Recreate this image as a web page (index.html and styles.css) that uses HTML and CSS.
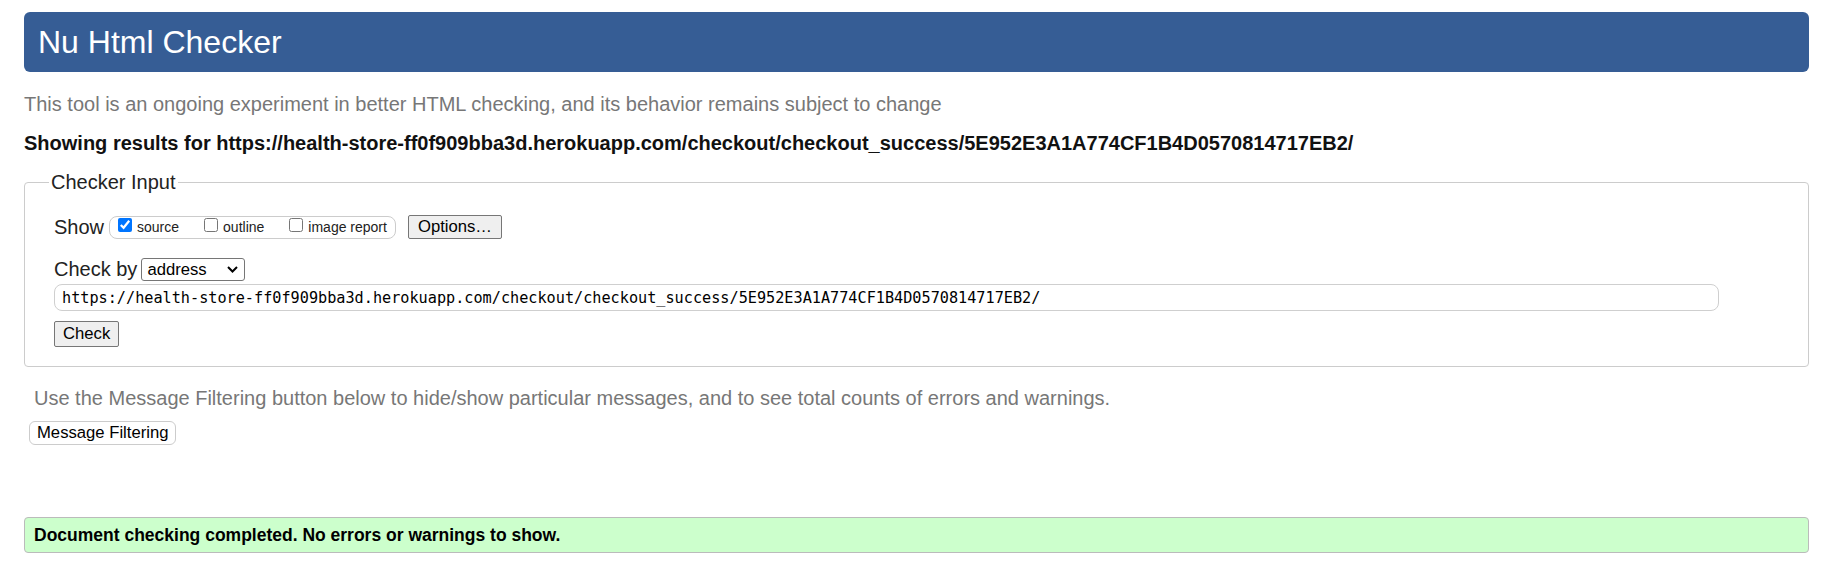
FILE: index.html
```html
<!DOCTYPE html>
<html lang="en">
<head>
<meta charset="utf-8">
<title>Nu Html Checker</title>
<link rel="stylesheet" href="styles.css">
</head>
<body>
<h1 class="title">Nu Html Checker</h1>
<p class="intro">This tool is an ongoing experiment in better HTML checking, and its behavior remains subject to change</p>
<p class="results">Showing results for https://health-store-ff0f909bba3d.herokuapp.com/checkout/checkout_success/5E952E3A1A774CF1B4D0570814717EB2/</p>
<form class="checker">
  <fieldset class="input-box">
    <legend class="legend">Checker Input</legend>
    <div class="row show-row">
      <span class="row-label">Show</span>
      <span class="pill">
        <label class="opt"><input class="cb" type="checkbox" checked><span>source</span></label>
        <label class="opt"><input class="cb" type="checkbox"><span>outline</span></label>
        <label class="opt"><input class="cb" type="checkbox"><span>image report</span></label>
      </span>
      <button type="button" class="btn btn-options">Options…</button>
    </div>
    <div class="row by-row">
      <span class="row-label">Check by</span>
      <span class="select"><span class="select-text">address</span><svg class="chev" width="11" height="7" viewBox="0 0 11 7"><path d="M1 1 L5.5 5.5 L10 1" fill="none" stroke="#000" stroke-width="2"/></svg></span>
    </div>
    <input class="url" type="text" value="https://health-store-ff0f909bba3d.herokuapp.com/checkout/checkout_success/5E952E3A1A774CF1B4D0570814717EB2/">
    <div class="submit-row"><button type="button" class="btn btn-check">Check</button></div>
  </fieldset>
</form>
<p class="filter-note">Use the Message Filtering button below to hide/show particular messages, and to see total counts of errors and warnings.</p>
<div class="filter-row"><button type="button" class="btn-filter">Message Filtering</button></div>
<div class="success">Document checking completed. No errors or warnings to show.</div>
</body>
</html>
```

FILE: styles.css
```css
html, body {
  background: #fff;
}
body {
  margin: 0;
  padding: 12px 27px 0 24px;
  font-family: "Liberation Sans", Arial, sans-serif;
  font-size: 20px;
  line-height: 23px;
  color: #111;
}
.title {
  margin: 0;
  height: 60px;
  line-height: 60px;
  padding: 0 14px;
  font-size: 32px;
  font-weight: normal;
  color: #fff;
  background: #365d95;
  border-radius: 6px;
}
.intro {
  margin: 21px 0 0;
  color: #777;
}
.results {
  margin: 16px 0 0;
  font-weight: bold;
  color: #111;
}
.checker {
  margin: 16px 0 0;
}
.input-box {
  margin: 0;
  min-width: 0;
  border: 1px solid #ccc;
  border-radius: 4px;
  padding: 21px 20px 19px 29px;
}
.legend {
  margin-left: -5px;
  padding: 0 2px;
  font-size: 20px;
  line-height: 23px;
  color: #222;
}
.row {
  display: flex;
  align-items: center;
}
.show-row {
  height: 24px;
}
.row-label {
  color: #222;
}
.pill {
  display: flex;
  align-items: center;
  gap: 25px;
  box-sizing: border-box;
  height: 23px;
  margin-left: 5px;
  padding: 0 8px 0 8px;
  border: 1px solid #ccc;
  border-radius: 8px;
  font-size: 14px;
  line-height: 16px;
  color: #222;
}
.opt {
  display: flex;
  align-items: center;
  gap: 5px;
}
.cb {
  width: 14px;
  height: 14px;
  margin: 0 0 5px 0;
}
.btn {
  box-sizing: border-box;
  font-family: "Liberation Sans", Arial, sans-serif;
  font-size: 16.67px;
  line-height: 20px;
  color: #000;
  background: #efefef;
  border: 1px solid #767676;
  border-radius: 2px;
  padding: 0 9px;
}
.btn-options {
  height: 24px;
  margin-left: 12px;
}
.by-row {
  margin-top: 19px;
  height: 23px;
}
.select {
  display: flex;
  align-items: center;
  justify-content: space-between;
  box-sizing: border-box;
  width: 104px;
  height: 23px;
  margin-left: 4px;
  padding: 0 6px 0 5px;
  border: 1px solid #767676;
  border-radius: 3px;
  font-size: 16.67px;
  color: #000;
}
.chev {
  display: block;
}
.url {
  display: block;
  box-sizing: border-box;
  width: 1665px;
  height: 27px;
  margin: 3px 0 0;
  padding: 0 7px;
  border: 1px solid #cfcfcf;
  border-radius: 8px;
  font-family: "DejaVu Sans Mono", "Liberation Mono", monospace;
  font-size: 15.2px;
  color: #000;
  background: #fff;
  outline: none;
}
.submit-row {
  display: flex;
  margin-top: 10px;
}
.btn-check {
  height: 26px;
  padding: 0 8px;
}
.filter-note {
  margin: 20px 0 0;
  padding-left: 10px;
  color: #777;
}
.filter-row {
  display: flex;
  margin-top: 11px;
  padding-left: 5px;
}
.btn-filter {
  box-sizing: border-box;
  height: 24px;
  padding: 0 7px;
  font-family: "Liberation Sans", Arial, sans-serif;
  font-size: 16.67px;
  line-height: 20px;
  color: #000;
  background: #fff;
  border: 1px solid #ccc;
  border-radius: 6px;
}
.success {
  display: flex;
  align-items: center;
  box-sizing: border-box;
  height: 36px;
  margin-top: 72px;
  padding: 0 9px;
  background: #ccffcc;
  border: 1px solid #bbb;
  border-radius: 4px;
  font-size: 17.5px;
  font-weight: bold;
  color: #000;
}
```
